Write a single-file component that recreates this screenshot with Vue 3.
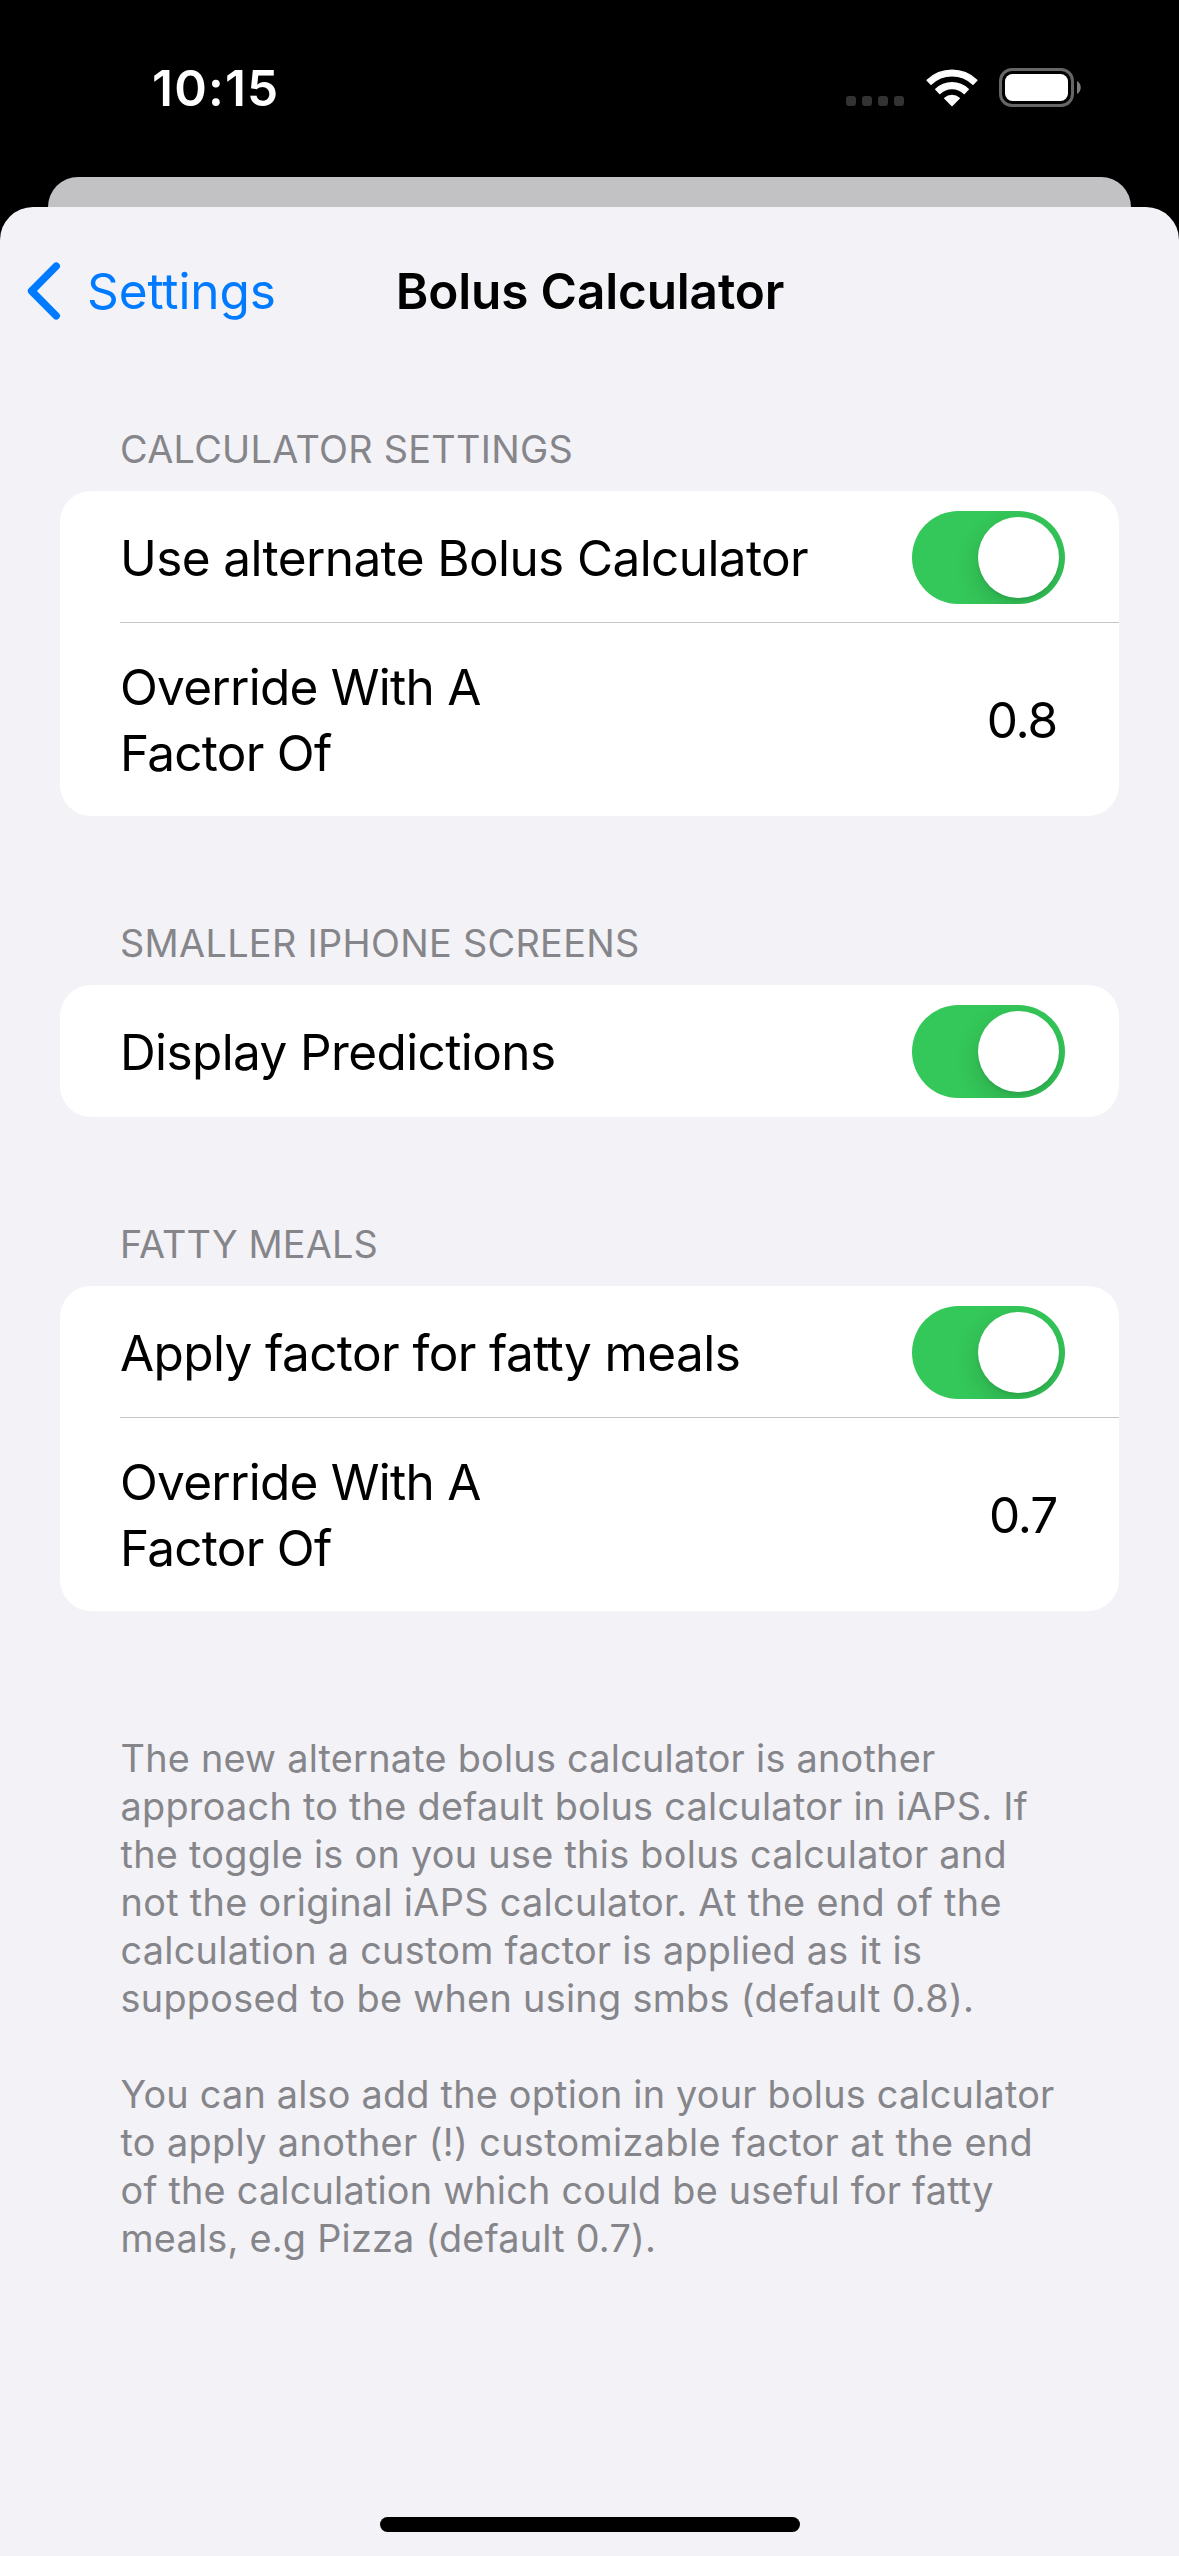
<script setup>
import { ref } from 'vue'

const sections = ref([
  {
    title: 'CALCULATOR SETTINGS',
    tracking: 0.31,
    toggle: { label: 'Use alternate Bolus Calculator', on: true },
    factor: '0.8',
  },
  {
    title: 'SMALLER IPHONE SCREENS',
    tracking: 0.33,
    toggle: { label: 'Display Predictions', on: true },
    factor: null,
  },
  {
    title: 'FATTY MEALS',
    tracking: 0.16,
    toggle: { label: 'Apply factor for fatty meals', on: true },
    factor: '0.7',
  },
])

/* Footer copy, one entry per line with its letter spacing in px. */
const notes = [
  [
    ['The new alternate bolus calculator is another', 0.25],
    ['approach to the default bolus calculator in iAPS. If', 0.28],
    ['the toggle is on you use this bolus calculator and', 0.29],
    ['not the original iAPS calculator. At the end of the', 0.33],
    ['calculation a custom factor is applied as it is', 0.29],
    ['supposed to be when using smbs (default 0.8).', 0.305],
  ],
  [
    ['You can also add the option in your bolus calculator', 0.22],
    ['to apply another (!) customizable factor at the end', 0.37],
    ['of the calculation which could be useful for fatty', 0.22],
    ['meals, e.g Pizza (default 0.7).', 0.23],
  ],
]
</script>

<template>
  <div class="phone">
    <header class="status">
      <span class="time">10:15</span>
      <div class="indicators">
        <div class="dots"><i v-for="n in 4" :key="n"></i></div>
        <svg class="wifi" width="52" height="38" viewBox="0 0 52 38">
          <g fill="#fff" stroke="#fff" stroke-width="1.5" stroke-linejoin="round">
            <path d="M1.2 11.3A35.75 35.75 0 0 1 50.8 11.3L47 15.25A30.25 30.25 0 0 0 5 15.25Z" />
            <path d="M9.8 20.3A23.25 23.25 0 0 1 42.2 20.3L38.2 24.4A17.5 17.5 0 0 0 13.8 24.4Z" />
            <path d="M18.8 29.2A10.7 10.7 0 0 1 33.2 29.2L26 36.4Z" />
          </g>
        </svg>
        <svg class="battery" width="83" height="39" viewBox="0 0 83 39">
          <rect x="1.5" y="1.5" width="72" height="36" rx="11.5" fill="none" stroke="#666" stroke-width="3" />
          <rect x="6" y="6" width="63" height="27" rx="7.5" fill="#fff" />
          <path d="M78 13C83 15.5 83 23.5 78 26Z" fill="#7d7d7d" />
        </svg>
      </div>
    </header>

    <div class="behind"></div>

    <main class="sheet">
      <nav class="nav">
        <a class="back">
          <svg width="34" height="58" viewBox="0 0 34 58">
            <path d="M29.2 4.2L4.6 29L29.2 53.8" fill="none" stroke="#007aff" stroke-width="7.5" stroke-linecap="round" stroke-linejoin="round" />
          </svg>
          <span>Settings</span>
        </a>
        <h1>Bolus Calculator</h1>
      </nav>

      <section v-for="s in sections" :key="s.title" class="group">
        <h2 :style="{ letterSpacing: s.tracking + 'px' }">{{ s.title }}</h2>
        <div class="card">
          <div class="row">
            <span class="label">{{ s.toggle.label }}</span>
            <button
              class="switch"
              :class="{ on: s.toggle.on }"
              role="switch"
              :aria-checked="s.toggle.on"
              @click="s.toggle.on = !s.toggle.on"
            ><i></i></button>
          </div>
          <div v-if="s.factor" class="row tall">
            <span class="label factor">Override With A<br />Factor Of</span>
            <span class="value">{{ s.factor }}</span>
          </div>
        </div>
      </section>

      <footer class="notes">
        <p v-for="(lines, i) in notes" :key="i">
          <span v-for="[text, tracking] in lines" :key="text" :style="{ letterSpacing: tracking + 'px' }">{{ text }}</span>
        </p>
      </footer>

      <div class="home"></div>
    </main>
  </div>
</template>

<style>
body {
  margin: 0;
  background: #000;
}
</style>

<style scoped>
.phone {
  display: flex;
  flex-direction: column;
  width: 1179px;
  height: 2556px;
  background: #000;
  color: #000;
  font-family: Inter, 'Liberation Sans', sans-serif;
  font-size: 49.5px;
  line-height: 66px;
  overflow: hidden;
}

.status {
  display: flex;
  justify-content: space-between;
  height: 177px;
  box-sizing: border-box;
  padding: 55px 97px 0 152px;
}
.time {
  color: #fff;
  font-weight: 600;
  letter-spacing: 1.2px;
}
.indicators {
  display: flex;
  align-items: flex-start;
  padding-top: 13px;
}
.dots {
  display: flex;
  gap: 6px;
  margin: 28px 21.5px 0 0;
}
.dots i {
  width: 10px;
  height: 10px;
  border-radius: 3px;
  background: #333;
}
.wifi {
  margin: 0.5px 21.5px 0 0;
}

.behind {
  height: 30px;
  margin: 0 48px;
  border-radius: 30px 30px 0 0;
  background: #c2c2c4;
}

.sheet {
  flex: 1;
  display: flex;
  flex-direction: column;
  border-radius: 33px 33px 0 0;
  background: #f2f2f7;
}

.nav {
  display: grid;
  grid-template-columns: 1fr auto 1fr;
  align-items: center;
  height: 168px;
  margin-bottom: 50px;
}
.back {
  display: flex;
  align-items: center;
  gap: 26px;
  padding-left: 27px;
  color: #007aff;
  letter-spacing: -0.1px;
}
h1 {
  margin: 0;
  padding-left: 1px;
  font-size: inherit;
  font-weight: 600;
  letter-spacing: -0.15px;
}

.group {
  padding: 0 60px;
  margin-bottom: 103px;
}
h2 {
  margin: 0 0 18px;
  padding-left: 60px;
  color: #85858a;
  font-size: 37.8px;
  font-weight: 400;
  line-height: 48px;
}
.card {
  border-radius: 31px;
  background: #fff;
}
.row {
  display: flex;
  align-items: center;
  justify-content: space-between;
  box-sizing: border-box;
  height: 132px;
  padding: 1px 54px 0 60px;
}
.row:not(:last-child) {
  background: linear-gradient(#c6c6c8, #c6c6c8) 60px 100% / 100% 1px no-repeat;
}
.row.tall {
  height: 193px;
  padding: 1px 62px 0 60px;
}
.label {
  letter-spacing: -0.61px;
}
.factor {
  letter-spacing: -0.74px;
}
.value {
  letter-spacing: -1.2px;
}

.switch {
  display: flex;
  justify-content: flex-start;
  width: 153px;
  height: 93px;
  padding: 6px;
  border: 0;
  border-radius: 47px;
  background: #e9e9eb;
  overflow: hidden;
}
.switch.on {
  justify-content: flex-end;
  background: #34c759;
}
.switch i {
  width: 81px;
  height: 81px;
  border-radius: 50%;
  background: #fff;
  box-shadow: 0 9px 24px rgba(0, 0, 0, 0.15), 0 3px 3px rgba(0, 0, 0, 0.06);
}

.notes {
  display: flex;
  flex-direction: column;
  gap: 48px;
  margin-top: 20px;
  padding-left: 120.5px;
  color: #85858a;
  font-size: 37.8px;
  line-height: 48px;
}
.notes p {
  display: flex;
  flex-direction: column;
  margin: 0;
  white-space: nowrap;
}

.home {
  width: 420px;
  height: 15px;
  margin: auto auto 24px 380px;
  border-radius: 8px;
  background: #000;
}
</style>
